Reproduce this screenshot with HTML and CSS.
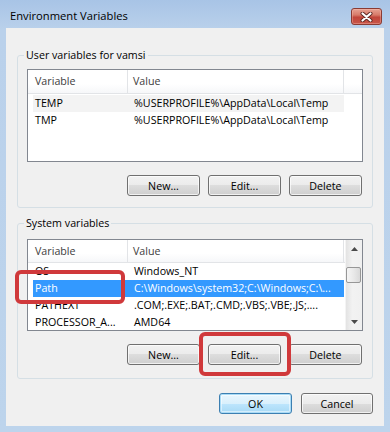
FILE: index.html
```html
<!DOCTYPE html>
<html lang="en">

<head>
  <meta charset="UTF-8">
  <meta name="viewport" content="width=device-width, initial-scale=1.0">
  <title>Environment Variables</title>
  <link rel="stylesheet" href="styles.css">
</head>

<body>
  <div class="window">
    <div class="titlebar">
      <span class="title">Environment Variables</span>
      <span class="close-btn">
        <svg width="13" height="10" viewBox="0 0 13 10">
          <path d="M2.5 1.5 L10.5 8.5 M10.5 1.5 L2.5 8.5" stroke="#5b2520" stroke-width="4" stroke-linecap="round" fill="none" />
          <path d="M2.5 1.5 L10.5 8.5 M10.5 1.5 L2.5 8.5" stroke="#fff" stroke-width="2.2" stroke-linecap="round" fill="none" />
        </svg>
      </span>
    </div>

    <div class="client">
      <fieldset class="group group-user">
        <legend>User variables for vamsi</legend>
        <div class="listview list-user">
          <div class="lv-main">
            <div class="lv-head">
              <span class="hd-var">Variable</span>
              <span class="hd-val">Value</span>
              <span class="hd-fill"></span>
            </div>
            <div class="lv-rows">
              <div class="lv-row hover"><span class="c-var">TEMP</span><span class="c-val">%USERPROFILE%\AppData\Local\Temp</span></div>
              <div class="lv-row"><span class="c-var">TMP</span><span class="c-val">%USERPROFILE%\AppData\Local\Temp</span></div>
            </div>
          </div>
        </div>
        <div class="btn-row">
          <button class="btn">New...</button>
          <button class="btn">Edit...</button>
          <button class="btn">Delete</button>
        </div>
      </fieldset>

      <fieldset class="group group-system">
        <legend>System variables</legend>
        <div class="listview list-system">
          <div class="lv-main">
            <div class="lv-head">
              <span class="hd-var">Variable</span>
              <span class="hd-val">Value</span>
            </div>
            <div class="lv-rows">
              <div class="lv-row"><span class="c-var">OS</span><span class="c-val">Windows_NT</span></div>
              <div class="lv-row selected"><span class="c-var">Path</span><span class="c-val">C:\Windows\system32;C:\Windows;C:\...</span></div>
              <div class="lv-row"><span class="c-var">PATHEXT</span><span class="c-val">.COM;.EXE;.BAT;.CMD;.VBS;.VBE;.JS;....</span></div>
              <div class="lv-row"><span class="c-var">PROCESSOR_A...</span><span class="c-val">AMD64</span></div>
            </div>
          </div>
          <div class="scrollbar">
            <span class="sb-arrow">
              <svg width="7" height="4" viewBox="0 0 7 4"><path d="M0 4 L3.5 0 L7 4 Z" fill="#4a4a4a" /></svg>
            </span>
            <span class="sb-track"><span class="sb-thumb"></span></span>
            <span class="sb-arrow">
              <svg width="7" height="4" viewBox="0 0 7 4"><path d="M0 0 L3.5 4 L7 0 Z" fill="#4a4a4a" /></svg>
            </span>
          </div>
        </div>
        <div class="btn-row">
          <button class="btn">New...</button>
          <button class="btn">Edit...</button>
          <button class="btn">Delete</button>
        </div>
      </fieldset>

      <div class="dialog-buttons">
        <button class="btn btn-default">OK</button>
        <button class="btn btn-cancel">Cancel</button>
      </div>
    </div>
  </div>

  <div class="callout callout-path"></div>
  <div class="callout callout-edit"></div>
</body>

</html>
```

FILE: styles.css
```css
* {
  box-sizing: border-box;
  margin: 0;
  padding: 0;
}

body {
  width: 390px;
  height: 432px;
  overflow: hidden;
  position: relative;
  background: #bcd3ec;
  font-family: 'Open Sans', 'Noto Sans', sans-serif;
  font-size: 10.7px;
  color: #000;
}

.window {
  height: 432px;
  background: linear-gradient(to bottom, #a8c4e6 0, #bad1eb 30px, #bdd4ec 100%);
}

.titlebar {
  height: 28px;
  display: flex;
  align-items: flex-start;
  justify-content: space-between;
  padding: 0 8px 0 10px;
}

.title {
  font-size: 11.2px;
  line-height: 16px;
  margin-top: 8px;
  color: #000;
}

.close-btn {
  width: 31px;
  height: 17px;
  margin-top: 8px;
  border: 1px solid #8a3b33;
  border-radius: 3px;
  background: linear-gradient(to bottom, #e6a193 0, #d77a69 40%, #c1453a 55%, #c8564a 100%);
  box-shadow: inset 0 0 0 1px rgba(255, 200, 190, 0.35);
  display: flex;
  align-items: center;
  justify-content: center;
}

.client {
  height: 398px;
  margin: 0 6px;
  background: #f0f0f0;
  padding: 19px 11px 0;
}

.group {
  border: 1px solid #d5dfe5;
  border-radius: 3px;
  padding: 6px 9px 11px;
}

.group legend {
  margin-left: -3px;
  padding: 0 2px;
  line-height: 16px;
}

.group-system {
  margin-top: 7px;
  padding: 8px 9px 13px;
}

.listview {
  display: flex;
  background: #fff;
  border: 1px solid #828790;
  overflow: hidden;
}

.list-user {
  height: 93px;
}

.list-system {
  height: 92px;
}

.lv-main {
  flex: 1;
  min-width: 0;
}

.lv-head {
  display: flex;
  height: 24px;
  border-bottom: 1px solid #e2e4e7;
  background: linear-gradient(to bottom, #fff 0, #fff 60%, #f6f7f9 100%);
  color: #404040;
  line-height: 23px;
}

.list-system .lv-head {
  height: 23px;
  line-height: 22px;
}

.hd-var {
  width: 100px;
  padding-left: 7px;
  border-right: 1px solid #e2e4e7;
}

.hd-val {
  width: 216px;
  padding-left: 5px;
  border-right: 1px solid #e2e4e7;
}

.hd-fill {
  flex: 1;
}

.lv-rows {
  padding: 1px 0 0 5px;
}

.list-system .lv-rows {
  padding-top: 0;
}

.lv-row {
  display: flex;
  width: 311px;
  height: 17px;
  line-height: 17px;
  white-space: nowrap;
}

.lv-row.hover {
  background: #f3f3f3;
}

.lv-row.selected {
  background: #3399ff;
  color: #fff;
}

.c-var {
  width: 95px;
  padding-left: 2px;
  overflow: hidden;
}

.c-val {
  flex: 1;
  padding-left: 6px;
  overflow: hidden;
}

.scrollbar {
  width: 17px;
  display: flex;
  flex-direction: column;
  background: linear-gradient(to right, #e3e3e3 0, #f2f2f2 40%, #f0f0f0 100%);
  border-left: 1px solid #f4f4f4;
}

.sb-arrow {
  height: 17px;
  display: flex;
  align-items: center;
  justify-content: center;
}

.sb-track {
  flex: 1;
  padding: 10px 1px 0 0;
}

.sb-thumb {
  display: block;
  height: 16px;
  border: 1px solid #979797;
  border-radius: 2px;
  background: linear-gradient(to right, #f5f5f5 0, #e9e9e9 50%, #d9d9d9 100%);
}

.btn-row {
  display: flex;
  justify-content: flex-end;
  gap: 8px;
  margin-top: 13px;
  padding-right: 1px;
}

.btn {
  width: 73px;
  height: 21px;
  font-family: inherit;
  font-size: 10.7px;
  color: #000;
  border: 1px solid #707070;
  border-radius: 3px;
  background: linear-gradient(to bottom, #f2f2f2 0, #ebebeb 50%, #dddddd 50%, #cfcfcf 100%);
  box-shadow: inset 0 0 0 1px rgba(255, 255, 255, 0.7);
}

.dialog-buttons {
  display: flex;
  justify-content: flex-end;
  gap: 9px;
  margin-top: 14px;
}

.btn-default {
  border-color: #3c7fb1;
  box-shadow: inset 0 0 0 1px #a9dbf6, inset 0 0 0 2px rgba(255, 255, 255, 0.5);
  background: linear-gradient(to bottom, #eaf6fd 0, #d9f0fc 50%, #bee6fd 50%, #a7d9f5 100%);
}

.btn-cancel {
  width: 72px;
}

.callout {
  position: absolute;
  border: 4px solid #d0393b;
  border-radius: 6px;
}

.callout-path {
  left: 15px;
  top: 270px;
  width: 110px;
  height: 34px;
}

.callout-edit {
  left: 199px;
  top: 332px;
  width: 92px;
  height: 44px;
}
```
